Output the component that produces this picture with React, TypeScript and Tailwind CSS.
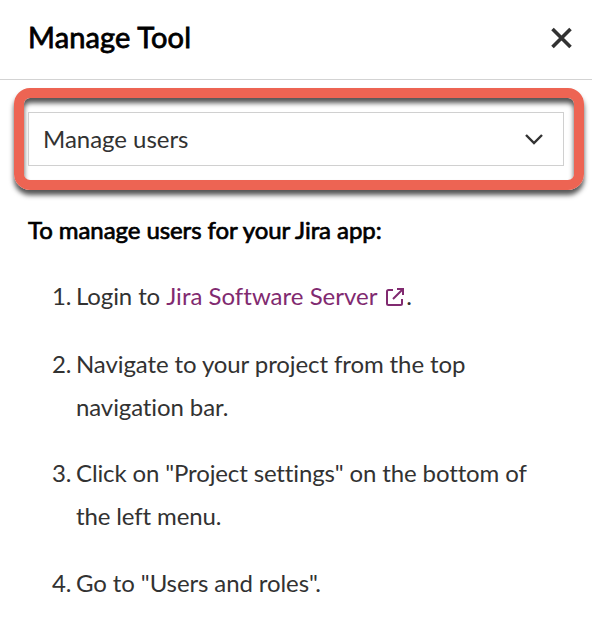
export default function App() {
  const row = "flex leading-[43px]";
  return (
    <main className="h-[642px] w-[592px] overflow-hidden bg-white font-['Lato',sans-serif] text-[24px] tracking-[-0.1px] text-[#323232] [font-variant-ligatures:none]">
      <header className="flex h-20 items-center justify-between border-b border-[#d3d3d3] pr-5 pb-[5px] pl-7">
        <h1 className="text-[29px] leading-[42px] font-normal tracking-[0.15px] text-black [-webkit-text-stroke:0.8px_black]">Manage Tool</h1>
        <svg className="mt-[2px]" width="22" height="22" viewBox="0 0 22 22" fill="none" stroke="#323232" strokeWidth="3.6"><path d="M2.5 2 20.5 20M20.5 2 2.5 20" /></svg>
      </header>
      <div className="mt-2 ml-[14px] h-[102px] w-[570px] rounded-[16px] border-[10px] border-[#ed6453] pt-[14px] pr-[10px] pl-[4px] shadow-[0_5px_5px_#555,inset_0_5px_5px_#555]">
        <div className="flex h-[54px] items-center justify-between border border-[#d0d0d0] pr-5 pl-[14px]">
          <span className="tracking-[-0.03px]">Manage users</span>
          <svg width="18" height="12" viewBox="0 0 18 12" fill="none" stroke="#323232" strokeWidth="2.4"><path d="m1 2 8 8 8-8" /></svg>
        </div>
      </div>
      <h2 className="mt-[18px] pl-7 text-[24px] leading-[43px] font-normal tracking-[-0.07px] text-black [-webkit-text-stroke:0.7px_black]">To manage users for your Jira app:</h2>
      <ol className="mt-[23px] flex flex-col pl-[52px]">
        <li className={`${row} mb-[25px]`}><span className="w-[24px] shrink-0">1.</span><span>Login to <a className="tracking-[0.01px] text-[#812a70]">Jira Software Server <svg className="ml-[2px] inline-block align-[-2px]" width="20" height="20" viewBox="0 0 20 20" fill="none" stroke="currentColor" strokeWidth="2"><path d="M8 3H3.5Q2 3 2 4.5v12Q2 18 3.5 18h12q1.5 0 1.5-1.5V12M12 2h6v6M18 2 8 12" /></svg></a><span className="ml-px">.</span></span></li>
        <li className={`${row} mb-[23px]`}><span className="w-[24px] shrink-0">2.</span><span>Navigate to your project from the top<br />navigation bar.</span></li>
        <li className={`${row} mb-[24px] tracking-[-0.13px]`}><span className="w-[24px] shrink-0">3.</span><span>Click on "Project settings" on the bottom of<br />the left menu.</span></li>
        <li className={row}><span className="w-[24px] shrink-0">4.</span><span>Go to "Users and roles".</span></li>
      </ol>
    </main>
  );
}
